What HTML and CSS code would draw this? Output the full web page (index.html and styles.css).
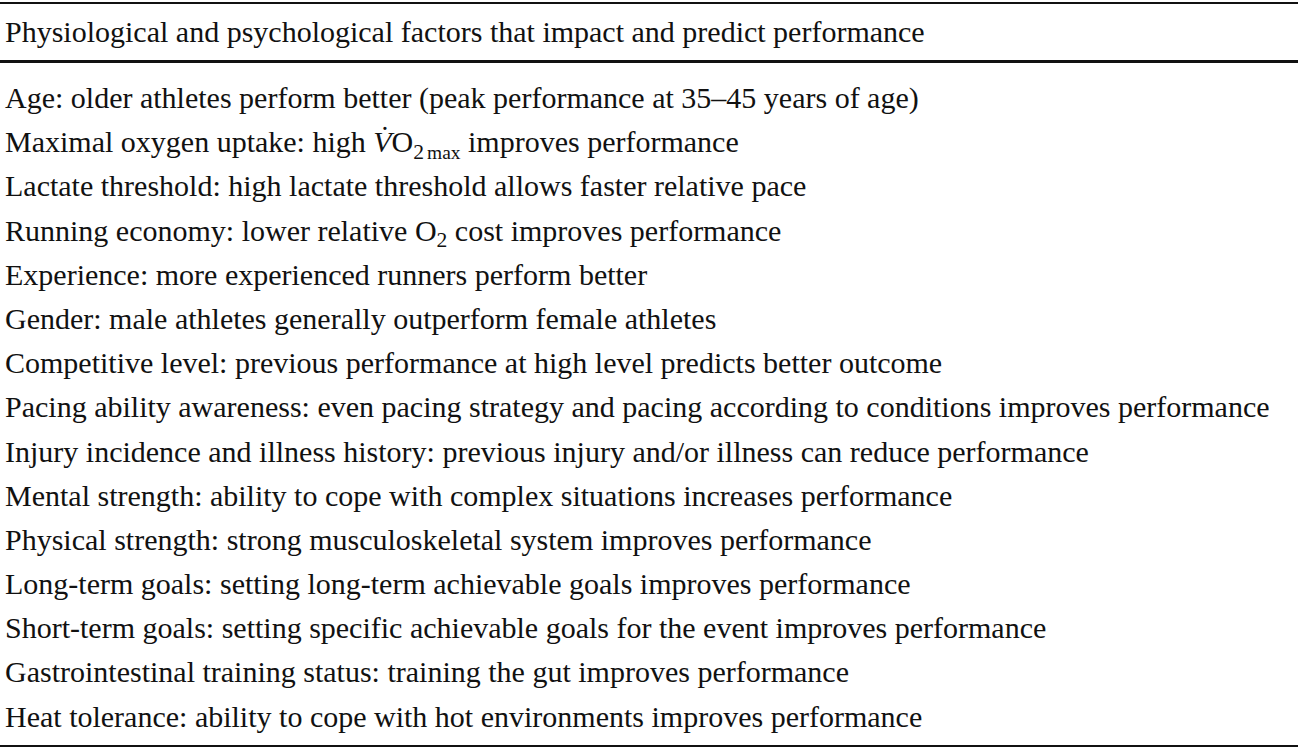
FILE: index.html
```html
<!DOCTYPE html>
<html>
<head>
<meta charset="utf-8">
<link rel="stylesheet" href="styles.css">
</head>
<body>
<div class="table">
  <div class="head">Physiological and psychological factors that impact and predict performance</div>
  <div class="body">
    <div class="row">Age: older athletes perform better (peak performance at 35–45 years of age)</div>
    <div class="row">Maximal oxygen uptake: high <span class="vdot">V̇</span>O<sub class="sub">2<span class="max">max</span></sub> improves performance</div>
    <div class="row">Lactate threshold: high lactate threshold allows faster relative pace</div>
    <div class="row">Running economy: lower relative O<sub class="sub">2</sub> cost improves performance</div>
    <div class="row">Experience: more experienced runners perform better</div>
    <div class="row">Gender: male athletes generally outperform female athletes</div>
    <div class="row">Competitive level: previous performance at high level predicts better outcome</div>
    <div class="row">Pacing ability awareness: even pacing strategy and pacing according to conditions improves performance</div>
    <div class="row">Injury incidence and illness history: previous injury and/or illness can reduce performance</div>
    <div class="row">Mental strength: ability to cope with complex situations increases performance</div>
    <div class="row">Physical strength: strong musculoskeletal system improves performance</div>
    <div class="row">Long-term goals: setting long-term achievable goals improves performance</div>
    <div class="row">Short-term goals: setting specific achievable goals for the event improves performance</div>
    <div class="row">Gastrointestinal training status: training the gut improves performance</div>
    <div class="row">Heat tolerance: ability to cope with hot environments improves performance</div>
  </div>
</div>
</body>
</html>
```
FILE: styles.css
```css
html, body {
  margin: 0;
  padding: 0;
  background: #ffffff;
}
body {
  padding-top: 2px;
  font-family: "Liberation Serif", "Times New Roman", serif;
  font-size: 30px;
  color: #111111;
}
.table {
  width: 1298px;
  border-top: 2px solid #111111;
  border-bottom: 2px solid #111111;
}
.head {
  height: 56px;
  line-height: 56px;
  padding-left: 5px;
  border-bottom: 3px solid #111111;
}
.body {
  padding-top: 13px;
  padding-bottom: 6px;
}
.row {
  height: 44.2px;
  line-height: 44.2px;
  padding-left: 5px;
  white-space: nowrap;
}
.vdot {
  font-style: italic;
}
.sub {
  font-size: 0.72em;
  line-height: 0;
  vertical-align: -0.3em;
}
.max {
  font-size: 0.9em;
  margin-left: 3px;
}
```
